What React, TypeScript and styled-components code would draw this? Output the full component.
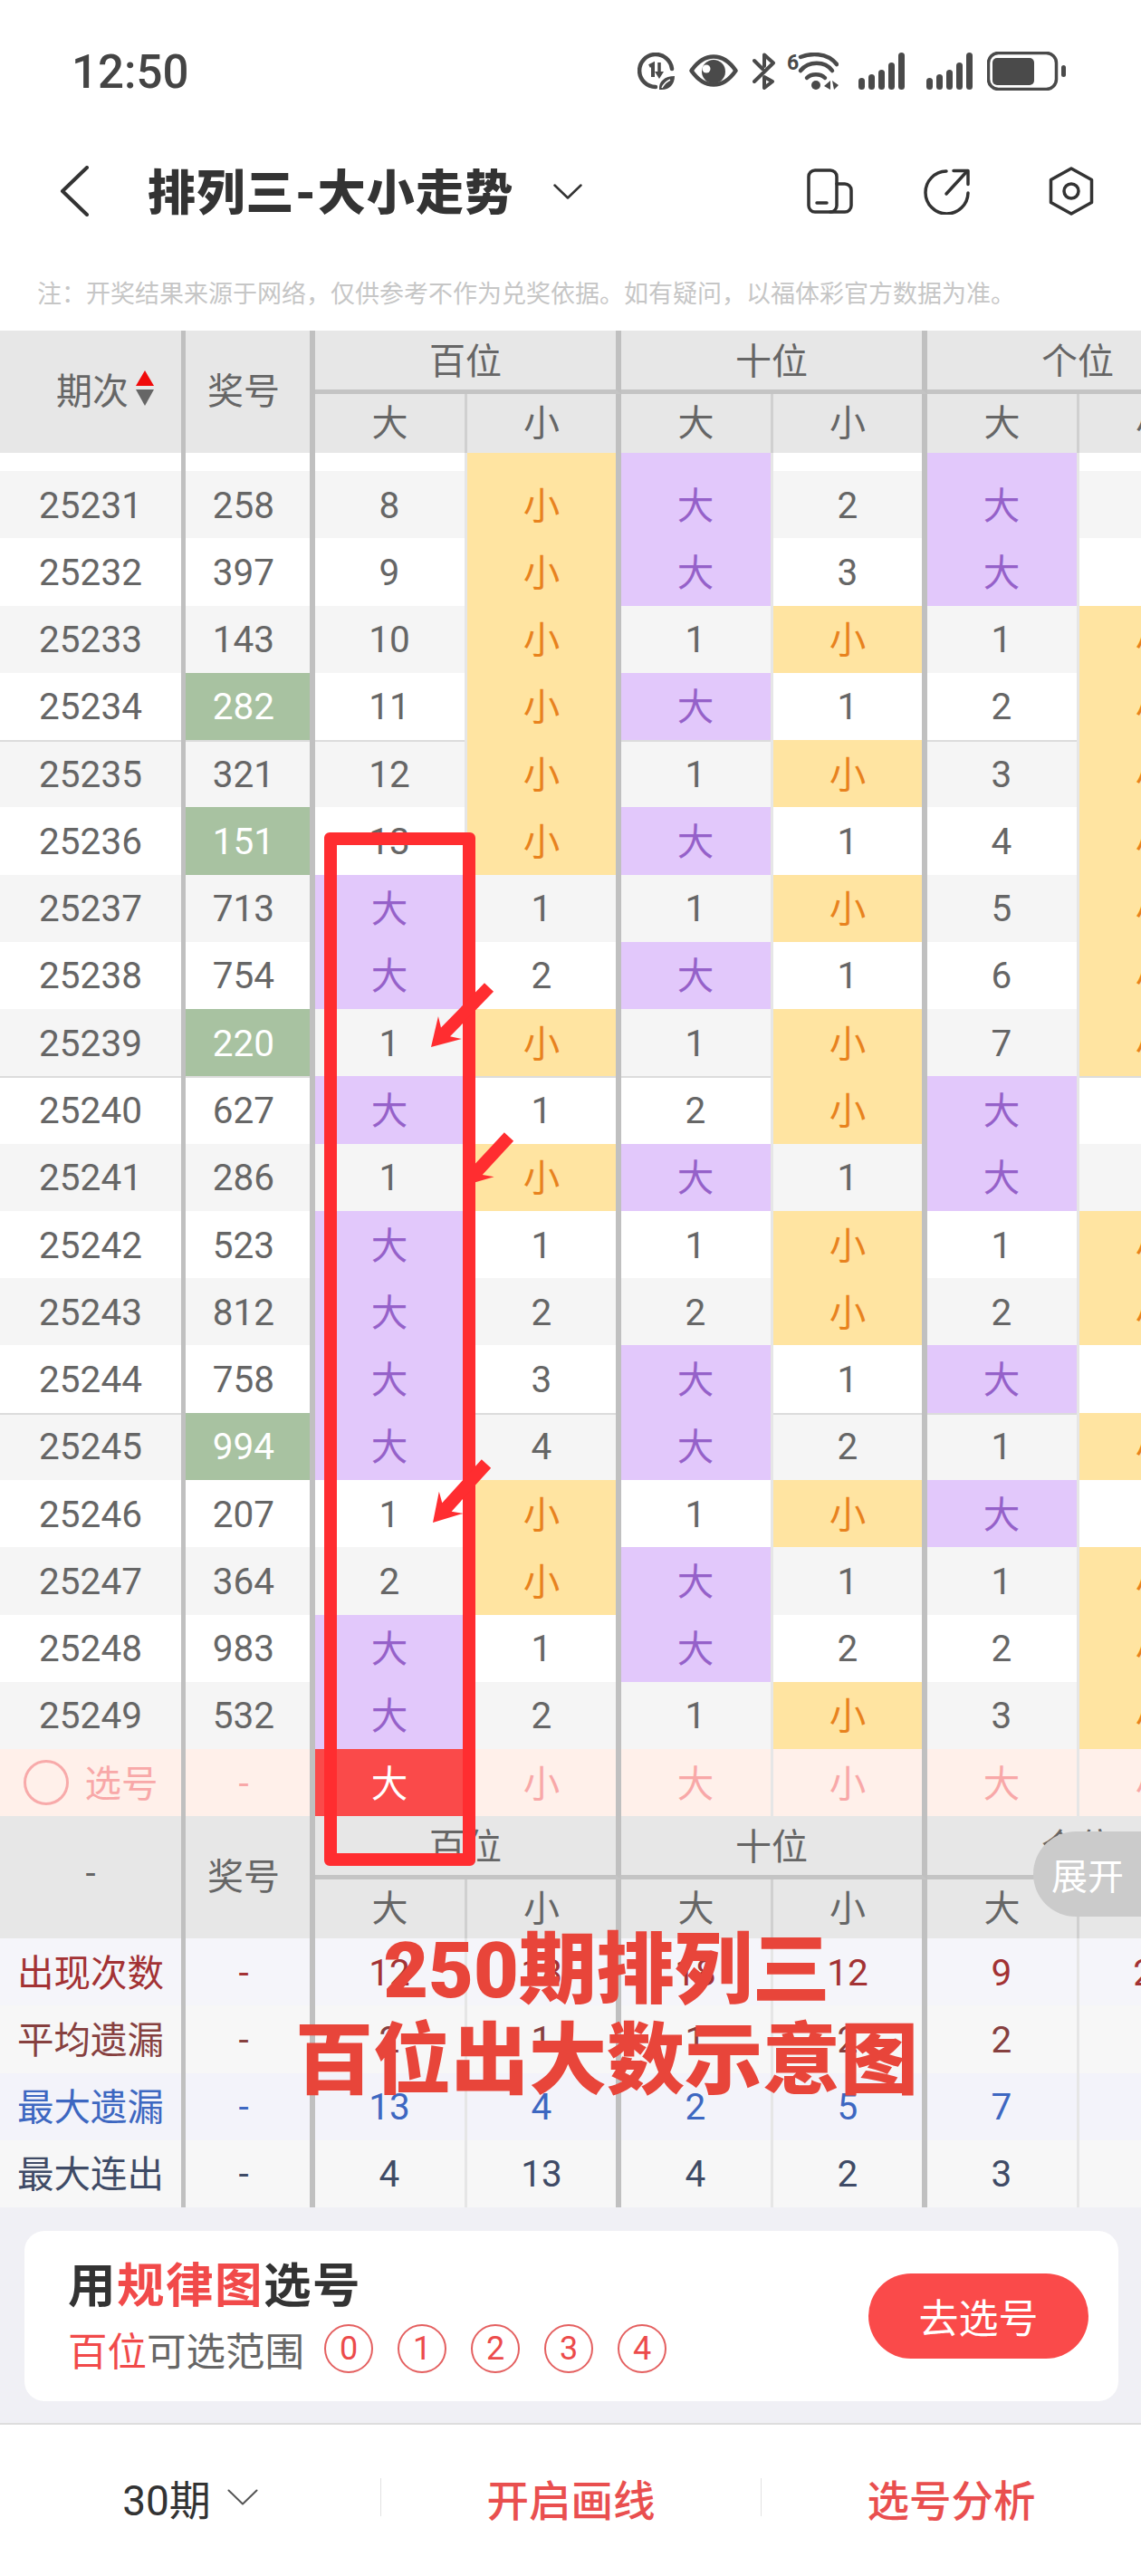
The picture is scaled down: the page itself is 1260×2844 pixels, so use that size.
import React from "react";
import styled, { createGlobalStyle } from "styled-components";

const GlobalStyle = createGlobalStyle`
  html, body {
    margin: 0;
    padding: 0;
    background: #ffffff;
  }
  * {
    box-sizing: border-box;
  }
`;

const Page = styled.div`
  position: relative;
  width: 1260px;
  height: 2844px;
  overflow: hidden;
  background: #ffffff;
  font-family: Roboto, "Noto Sans CJK SC", sans-serif;
  color: #666666;
`;

/* status bar */
const StatusBar = styled.div`
  display: flex;
  align-items: center;
  height: 156px;
  padding: 0 83px 0 79px;
`;

const Clock = styled.div`
  padding-top: 2px;
  font-size: 51px;
  font-weight: 500;
  color: #444444;
`;

const StatusIcons = styled.div`
  display: flex;
  align-items: center;
  margin-left: auto;
  color: #4a4a4a;
`;

const StatusSvg = styled.svg<{ $gap?: number }>`
  display: block;
  margin-left: ${(p) => p.$gap ?? 0}px;
`;

/* nav bar */
const NavBar = styled.div`
  display: flex;
  align-items: center;
  height: 110px;
  padding: 0 52px 0 66px;
  color: #333333;
`;

const Title = styled.div`
  margin-left: 65px;
  padding-bottom: 5px;
  font-size: 53px;
  font-weight: 900;
  color: #333333;
  letter-spacing: 1.2px;
`;

const NavIcons = styled.div`
  display: flex;
  align-items: center;
  margin-left: auto;
`;

const NavSvg = styled.svg<{ $gap?: number }>`
  display: block;
  margin-left: ${(p) => p.$gap ?? 0}px;
`;

const Notice = styled.div`
  display: flex;
  align-items: center;
  height: 99px;
  padding: 14px 0 0 41px;
  font-size: 27px;
  color: #c6c6c6;
  white-space: nowrap;
`;

/* table */
const TableWrap = styled.div`
  width: 1260px;
  overflow: hidden;
`;

const COLUMNS = "205px 143px 168px 170px 168px 170px 168px 170px";

const Head = styled.div`
  display: grid;
  grid-template-columns: ${COLUMNS};
  grid-template-rows: 70px 65px;
  width: 1362px;
  background: #e7e7e7;
  font-size: 40px;
  color: #666666;
`;

const HeadCell = styled.div<{ $rows?: number; $wide?: boolean; $line?: "thin" | "thick" | "group" }>`
  display: flex;
  align-items: center;
  justify-content: center;
  grid-row: span ${(p) => p.$rows ?? 1};
  grid-column: span ${(p) => (p.$wide ? 2 : 1)};
  padding-bottom: ${(p) => (p.$wide ? 4 : 8)}px;
  border-right: ${(p) => (p.$line === "thin" ? "3px solid #d0d0d0" : p.$line === "group" ? "6px solid #c0c0c0" : "0")};
  border-bottom: ${(p) => (p.$wide ? "5px solid #c4c4c4" : "0")};
  white-space: nowrap;
`;

const PeriodHead = styled(HeadCell)`
  border-right: 5px solid #c0c0c0;
  justify-content: flex-start;
  padding-left: 62px;
  gap: 8px;
`;

const DashHead = styled(HeadCell)`
  border-right: 5px solid #c0c0c0;
`;

const PrizeHead = styled(HeadCell)`
  padding-right: 9px;
  border-right: 6px solid #c0c0c0;
`;

const SortMark = styled.span`
  display: flex;
  flex-direction: column;
  gap: 4px;
`;

const SortUp = styled.i`
  display: block;
  width: 0;
  height: 0;
  border-left: 10px solid transparent;
  border-right: 10px solid transparent;
  border-bottom: 17px solid #f00a0a;
`;

const SortDown = styled.i`
  display: block;
  width: 0;
  height: 0;
  border-left: 10px solid transparent;
  border-right: 10px solid transparent;
  border-top: 18px solid #666666;
`;

const Row = styled.div<{ $even?: boolean; $split?: boolean; $height?: number; $bg?: string }>`
  display: grid;
  grid-template-columns: ${COLUMNS};
  width: 1362px;
  height: ${(p) => p.$height ?? 74.27}px;
  background: ${(p) => p.$bg ?? (p.$even ? "#f5f5f5" : "#ffffff")};
  font-size: 40px;
  color: #666666;
  box-shadow: ${(p) => (p.$split ? "inset 0 2px 0 #dcdcdc" : "none")};
`;

const Cell = styled.div<{
  $line?: "period" | "prize" | "thin" | "group";
  $fill?: string;
  $color?: string;
  $han?: boolean;
}>`
  display: flex;
  align-items: center;
  justify-content: center;
  padding: ${(p) => (p.$han ? "0 0 4px" : "1px 0 0")};
  padding-right: ${(p) => (p.$line === "prize" ? 9 : p.$line === "thin" ? 1 : 0)}px;
  border-right: ${(p) =>
    p.$line === "period"
      ? "5px solid #c0c0c0"
      : p.$line === "prize" || p.$line === "group"
        ? "6px solid #c0c0c0"
        : p.$line === "thin"
          ? "3px solid #e6e6e6"
          : "0"};
  background: ${(p) => p.$fill ?? "transparent"};
  background-clip: padding-box;
  color: ${(p) => p.$color ?? "inherit"};
  font-size: 40.5px;
  white-space: nowrap;
`;

const PickCircle = styled.span`
  width: 50px;
  height: 50px;
  margin: 4px 18px 0 0;
  border: 3px solid #f8aaaa;
  border-radius: 50%;
`;

/* bottom card */
const Footer = styled.div`
  height: 240px;
  padding: 26px 25px 0 27px;
  background: #f0f0f5;
  border-bottom: 2px solid #dddddd;
`;

const PickCard = styled.div`
  display: flex;
  align-items: center;
  justify-content: space-between;
  height: 188px;
  padding: 0 33px 0 48px;
  background: #ffffff;
  border-radius: 22px;
`;

const CardTitle = styled.div`
  margin-top: 3px;
  font-size: 52.5px;
  font-weight: 700;
  line-height: 62px;
  color: #333333;
  letter-spacing: 1.5px;
`;

const Red = styled.span`
  color: #f14a4a;
`;

const RangeRow = styled.div`
  display: flex;
  align-items: center;
  margin-top: 7px;
  font-size: 43.5px;
  color: #666666;
`;

const BallList = styled.div`
  display: flex;
  gap: 27px;
  margin-left: 22px;
`;

const Ball = styled.span`
  display: flex;
  align-items: center;
  justify-content: center;
  width: 54px;
  height: 54px;
  border: 2px solid #e46060;
  border-radius: 50%;
  font-size: 36px;
  color: #ec4b4b;
`;

const GoButton = styled.button`
  all: unset;
  display: flex;
  align-items: center;
  justify-content: center;
  width: 243px;
  height: 94px;
  border-radius: 47px;
  background: #fa4a4a;
  font-size: 44px;
  color: #ffffff;
`;

const BottomBar = styled.div`
  display: grid;
  grid-template-columns: repeat(3, 1fr);
  align-items: center;
  height: 166px;
  padding-bottom: 6px;
`;

const BarItem = styled.div<{ $divider?: boolean; $active?: boolean }>`
  display: flex;
  align-items: center;
  justify-content: center;
  gap: 18px;
  height: 42px;
  border-left: ${(p) => (p.$divider ? "1px solid #e2e2e2" : "0")};
  font-size: ${(p) => (p.$active ? 46.5 : 46)}px;
  font-weight: ${(p) => (p.$active ? 500 : 400)};
  color: ${(p) => (p.$active ? "#e94f4f" : "#333333")};
  white-space: nowrap;
`;

/* things lying over the table */
const ExpandTab = styled.div`
  position: absolute;
  left: 1141px;
  top: 2022px;
  display: flex;
  align-items: center;
  width: 119px;
  height: 94px;
  padding-left: 20px;
  border-radius: 47px 0 0 47px;
  background: #cbcbcb;
  font-size: 40px;
  color: #ffffff;
`;

const HighlightBox = styled.div`
  position: absolute;
  left: 358px;
  top: 919px;
  width: 167px;
  height: 1141px;
  border: 14px solid #ff2d30;
  border-radius: 6px;
`;

const ArrowLayer = styled.svg`
  position: absolute;
  left: 0;
  top: 0;
`;

const Caption = styled.div`
  position: absolute;
  left: 0;
  top: 2126px;
  width: 1340px;
  text-align: center;
  font-size: 86px;
  font-weight: 900;
  line-height: 100px;
  color: #e8453a;
`;

const PURPLE = "#e2c8fb";
const PURPLE_TEXT = "#9561c9";
const YELLOW = "#ffe4a1";
const YELLOW_TEXT = "#e8821e";
const GREEN = "#a8c2a1";
const PINK_TEXT = "#f8a8a8";

const NOTICE_TEXT =
  "注\uFF1A开奖结果来源于网络\uFF0C仅供参考不作为兑奖依据。如有疑问\uFF0C以福体彩官方数据为准。";

type RowData = [string, string, boolean, string];

const ROWS: RowData[] = [
  ["25231", "258", false, "8 小 大 2 大 1"],
  ["25232", "397", false, "9 小 大 3 大 2"],
  ["25233", "143", false, "10 小 1 小 1 小"],
  ["25234", "282", true, "11 小 大 1 2 小"],
  ["25235", "321", false, "12 小 1 小 3 小"],
  ["25236", "151", true, "13 小 大 1 4 小"],
  ["25237", "713", false, "大 1 1 小 5 小"],
  ["25238", "754", false, "大 2 大 1 6 小"],
  ["25239", "220", true, "1 小 1 小 7 小"],
  ["25240", "627", false, "大 1 2 小 大 1"],
  ["25241", "286", false, "1 小 大 1 大 2"],
  ["25242", "523", false, "大 1 1 小 1 小"],
  ["25243", "812", false, "大 2 2 小 2 小"],
  ["25244", "758", false, "大 3 大 1 大 1"],
  ["25245", "994", true, "大 4 大 2 1 小"],
  ["25246", "207", false, "1 小 1 小 大 1"],
  ["25247", "364", false, "2 小 大 1 1 小"],
  ["25248", "983", false, "大 1 大 2 2 小"],
  ["25249", "532", false, "大 2 1 小 3 小"],
];

const STATS = [
  { label: "出现次数", color: "#a33234", bg: "#f5f5fa", values: ["12", "18", "18", "12", "9", "21"] },
  { label: "平均遗漏", color: "#86403f", bg: "#f7f7f7", values: ["2", "1", "1", "2", "2", "1"] },
  { label: "最大遗漏", color: "#3d67c1", bg: "#f3f3fa", values: ["13", "4", "2", "5", "7", "1"] },
  { label: "最大连出", color: "#3f4b66", bg: "#f7f7f7", values: ["4", "13", "4", "2", "3", "4"] },
];

const lineOf = (i: number) => (i % 2 === 0 ? "thin" : "group") as "thin" | "group";

const fillOf = (v: string) => (v === "大" ? PURPLE : v === "小" ? YELLOW : undefined);
const colorOf = (v: string) => (v === "大" ? PURPLE_TEXT : v === "小" ? YELLOW_TEXT : undefined);

const arrowPoints = (tx: number, ty: number, hx: number, hy: number) => {
  const len = Math.hypot(hx - tx, hy - ty);
  const ux = (hx - tx) / len;
  const uy = (hy - ty) / len;
  const nx = -uy;
  const ny = ux;
  const base = len - 27;
  const at = (along: number, side: number) =>
    `${tx + ux * along + nx * side},${ty + uy * along + ny * side}`;
  return [at(0, 7), at(base + 4, 7), at(base - 3, 18), at(len, 0), at(base - 3, -18), at(base + 4, -7), at(0, -7)].join(" ");
};

const SIGNAL_BARS = [13, 17, 22, 30, 41];

const Signal = ({ gap }: { gap?: number }) => (
  <StatusSvg $gap={gap} width="51" height="41" viewBox="0 0 51 41" fill="currentColor">
    {SIGNAL_BARS.map((h, i) => (
      <rect key={h} x={i * 11} y={41 - h} width="7" height={h} rx="3.5" />
    ))}
  </StatusSvg>
);

const GroupHeader = () => (
  <>
    <HeadCell $wide $line="group">百位</HeadCell>
    <HeadCell $wide $line="group">十位</HeadCell>
    <HeadCell $wide $line="group">个位</HeadCell>
    <HeadCell $line="thin">大</HeadCell>
    <HeadCell $line="group">小</HeadCell>
    <HeadCell $line="thin">大</HeadCell>
    <HeadCell $line="group">小</HeadCell>
    <HeadCell $line="thin">大</HeadCell>
    <HeadCell $line="group">小</HeadCell>
  </>
);

const App = () => {
  return (
    <Page>
      <GlobalStyle />
      <StatusBar>
        <Clock>12:50</Clock>
        <StatusIcons>
          <StatusSvg width="41" height="41" viewBox="0 0 41 41" fill="none" stroke="currentColor">
            <path d="M38 18A18 18 0 1 0 20 38" strokeWidth="4.5" strokeLinecap="round" />
            <path d="M13 15l4-2v14" strokeWidth="4" />
            <path d="M24 11v14" strokeWidth="3.5" />
            <path d="M24 29l-5-8h10z" fill="currentColor" stroke="none" />
            <path d="M24 41c-1-9 6-15 17-15 0 9-6 15-14 15z" fill="currentColor" stroke="none" />
            <path d="M27 39c2-4 5-7 9-9" stroke="#fff" strokeWidth="1.5" />
          </StatusSvg>
          <StatusSvg $gap={16} width="54" height="36" viewBox="0 0 54 36" fill="none" stroke="currentColor">
            <path d="M2.5 18C10 7 18 2.5 27 2.5S44 7 51.5 18C44 29 36 33.5 27 33.5S10 29 2.5 18z" strokeWidth="4.5" strokeLinejoin="round" />
            <circle cx="27" cy="19" r="13" fill="currentColor" stroke="none" />
            <circle cx="19" cy="16" r="4.5" fill="#fff" stroke="none" />
          </StatusSvg>
          <StatusSvg $gap={16} width="25" height="41" viewBox="0 0 25 41" fill="none" stroke="currentColor" strokeWidth="4" strokeLinecap="round" strokeLinejoin="round">
            <path d="M2 9l9 9" />
            <path d="M13 15V2.5l10 9L2 32" />
            <path d="M13 27l9 5-9 7z" />
          </StatusSvg>
          <StatusSvg $gap={13} width="57" height="41" viewBox="0 0 57 41" fill="none" stroke="currentColor" strokeLinecap="round">
            <text x="0" y="19" fontFamily="Roboto, sans-serif" fontSize="23" fontWeight="700" fill="currentColor" stroke="none">6</text>
            <path d="M15 5C25 1 44 -1 55 13" strokeWidth="4.5" />
            <path d="M15 20C24 9 42 9 50 20" strokeWidth="4.5" />
            <path d="M22 28C27 23 37 23 42 28" strokeWidth="4.5" />
            <circle cx="32" cy="36" r="5" fill="currentColor" stroke="none" />
            <path d="M41 37l7-6v10zM50 31l7 5-5 5z" fill="currentColor" stroke="none" />
          </StatusSvg>
          <Signal gap={22} />
          <Signal gap={24} />
          <StatusSvg $gap={16} width="87" height="43" viewBox="0 0 87 43" fill="currentColor">
            <rect x="1.5" y="1.5" width="75" height="40" rx="11" fill="none" stroke="currentColor" strokeWidth="3.5" />
            <rect x="6" y="7" width="46" height="30" rx="5" />
            <rect x="82" y="15" width="5" height="13" rx="2.5" />
          </StatusSvg>
        </StatusIcons>
      </StatusBar>

      <NavBar>
        <NavSvg width="32" height="56" viewBox="0 0 32 56" fill="none" stroke="currentColor" strokeWidth="4" strokeLinecap="round" strokeLinejoin="round">
          <path d="M30 2L3 28l27 26" />
        </NavSvg>
        <Title>排列三-大小走势</Title>
        <NavSvg $gap={44} width="32" height="17" viewBox="0 0 32 17" fill="none" stroke="currentColor" strokeWidth="2.5" strokeLinecap="round" strokeLinejoin="round">
          <path d="M1.5 1.5L16 15.5 30.5 1.5" />
        </NavSvg>
        <NavIcons>
          <NavSvg width="51" height="50" viewBox="0 0 51 50" fill="none" stroke="currentColor" strokeWidth="3.5" strokeLinecap="round">
            <rect x="2" y="2" width="31" height="46" rx="7" />
            <path d="M33 17h9a7 7 0 0 1 7 7v17a7 7 0 0 1-7 7H26" />
            <path d="M11 38h11" />
          </NavSvg>
          <NavSvg $gap={78} width="51" height="51" viewBox="0 0 51 51" fill="none" stroke="currentColor" strokeWidth="3.5" strokeLinecap="round" strokeLinejoin="round">
            <path d="M25 3A23.5 23.5 0 1 0 49 27" />
            <path d="M25 28L48 3" />
            <path d="M33 2.5h16v15" />
          </NavSvg>
          <NavSvg $gap={87} width="50" height="54" viewBox="0 0 50 54" fill="none" stroke="currentColor" strokeWidth="3.5" strokeLinejoin="round">
            <path d="M25 2L47.5 14.5v25L25 52 2.5 39.5v-25z" />
            <circle cx="25" cy="27" r="8" />
          </NavSvg>
        </NavIcons>
      </NavBar>

      <Notice>{NOTICE_TEXT}</Notice>

      <TableWrap>
        <Head>
          <PeriodHead $rows={2}>
            期次
            <SortMark>
              <SortUp />
              <SortDown />
            </SortMark>
          </PeriodHead>
          <PrizeHead $rows={2}>奖号</PrizeHead>
          <GroupHeader />
        </Head>

        <Row $height={20}>
          <Cell $line="period" />
          <Cell $line="prize" />
          <Cell $line="thin" />
          <Cell $line="group" $fill={YELLOW} />
          <Cell $line="thin" $fill={PURPLE} />
          <Cell $line="group" />
          <Cell $line="thin" $fill={PURPLE} />
          <Cell $line="group" />
        </Row>

        {ROWS.map(([id, prize, hot, data], i) => (
          <Row key={id} $even={i % 2 === 0} $split={id.endsWith("5") || id.endsWith("0")}>
            <Cell $line="period">{id}</Cell>
            <Cell $line="prize" $fill={hot ? GREEN : undefined} $color={hot ? "#ffffff" : undefined}>
              {prize}
            </Cell>
            {data.split(" ").map((v, c) => (
              <Cell key={c} $line={lineOf(c)} $fill={fillOf(v)} $color={colorOf(v)} $han={v === "大" || v === "小"}>
                {v}
              </Cell>
            ))}
          </Row>
        ))}

        <Row $height={74} $bg="#fff0ea">
          <Cell $line="period" $color={PINK_TEXT} $han>
            <PickCircle />
            选号
          </Cell>
          <Cell $line="prize" $color={PINK_TEXT}>-</Cell>
          <Cell $line="thin" $fill="#fa4a4a" $color="#ffffff" $han>大</Cell>
          <Cell $line="group" $color={PINK_TEXT} $han>小</Cell>
          <Cell $line="thin" $color={PINK_TEXT} $han>大</Cell>
          <Cell $line="group" $color={PINK_TEXT} $han>小</Cell>
          <Cell $line="thin" $color={PINK_TEXT} $han>大</Cell>
          <Cell $line="group" $color={PINK_TEXT} $han>小</Cell>
        </Row>

        <Head>
          <DashHead $rows={2}>-</DashHead>
          <PrizeHead $rows={2}>奖号</PrizeHead>
          <GroupHeader />
        </Head>

        {STATS.map((s) => (
          <Row key={s.label} $bg={s.bg} $height={74.25}>
            <Cell $line="period" $color={s.color} $han>{s.label}</Cell>
            <Cell $line="prize" $color={s.color}>-</Cell>
            {s.values.map((v, c) => (
              <Cell key={c} $line={lineOf(c)} $color={s.color}>{v}</Cell>
            ))}
          </Row>
        ))}
      </TableWrap>

      <Footer>
        <PickCard>
          <div>
            <CardTitle>
              用<Red>规律图</Red>选号
            </CardTitle>
            <RangeRow>
              <Red>百位</Red>可选范围
              <BallList>
                {["0", "1", "2", "3", "4"].map((n) => (
                  <Ball key={n}>{n}</Ball>
                ))}
              </BallList>
            </RangeRow>
          </div>
          <GoButton>去选号</GoButton>
        </PickCard>
      </Footer>

      <BottomBar>
        <BarItem>
          30期
          <svg width="34" height="18" viewBox="0 0 34 18" fill="none" stroke="#555555" strokeWidth="2" strokeLinecap="round" strokeLinejoin="round">
            <path d="M1.5 1.5L17 16.5 32.5 1.5" />
          </svg>
        </BarItem>
        <BarItem $divider $active>开启画线</BarItem>
        <BarItem $divider $active>选号分析</BarItem>
      </BottomBar>

      <ExpandTab>展开</ExpandTab>
      <HighlightBox />
      <ArrowLayer width="1260" height="2844" viewBox="0 0 1260 2844" fill="#ff2d30">
        <polygon points={arrowPoints(540, 1090, 476, 1156)} />
        <polygon points={arrowPoints(562, 1255, 512, 1309)} />
        <polygon points={arrowPoints(537, 1616, 478, 1681)} />
      </ArrowLayer>
      <Caption>
        250期排列三
        <br />
        百位出大数示意图
      </Caption>
    </Page>
  );
};

export default App;
